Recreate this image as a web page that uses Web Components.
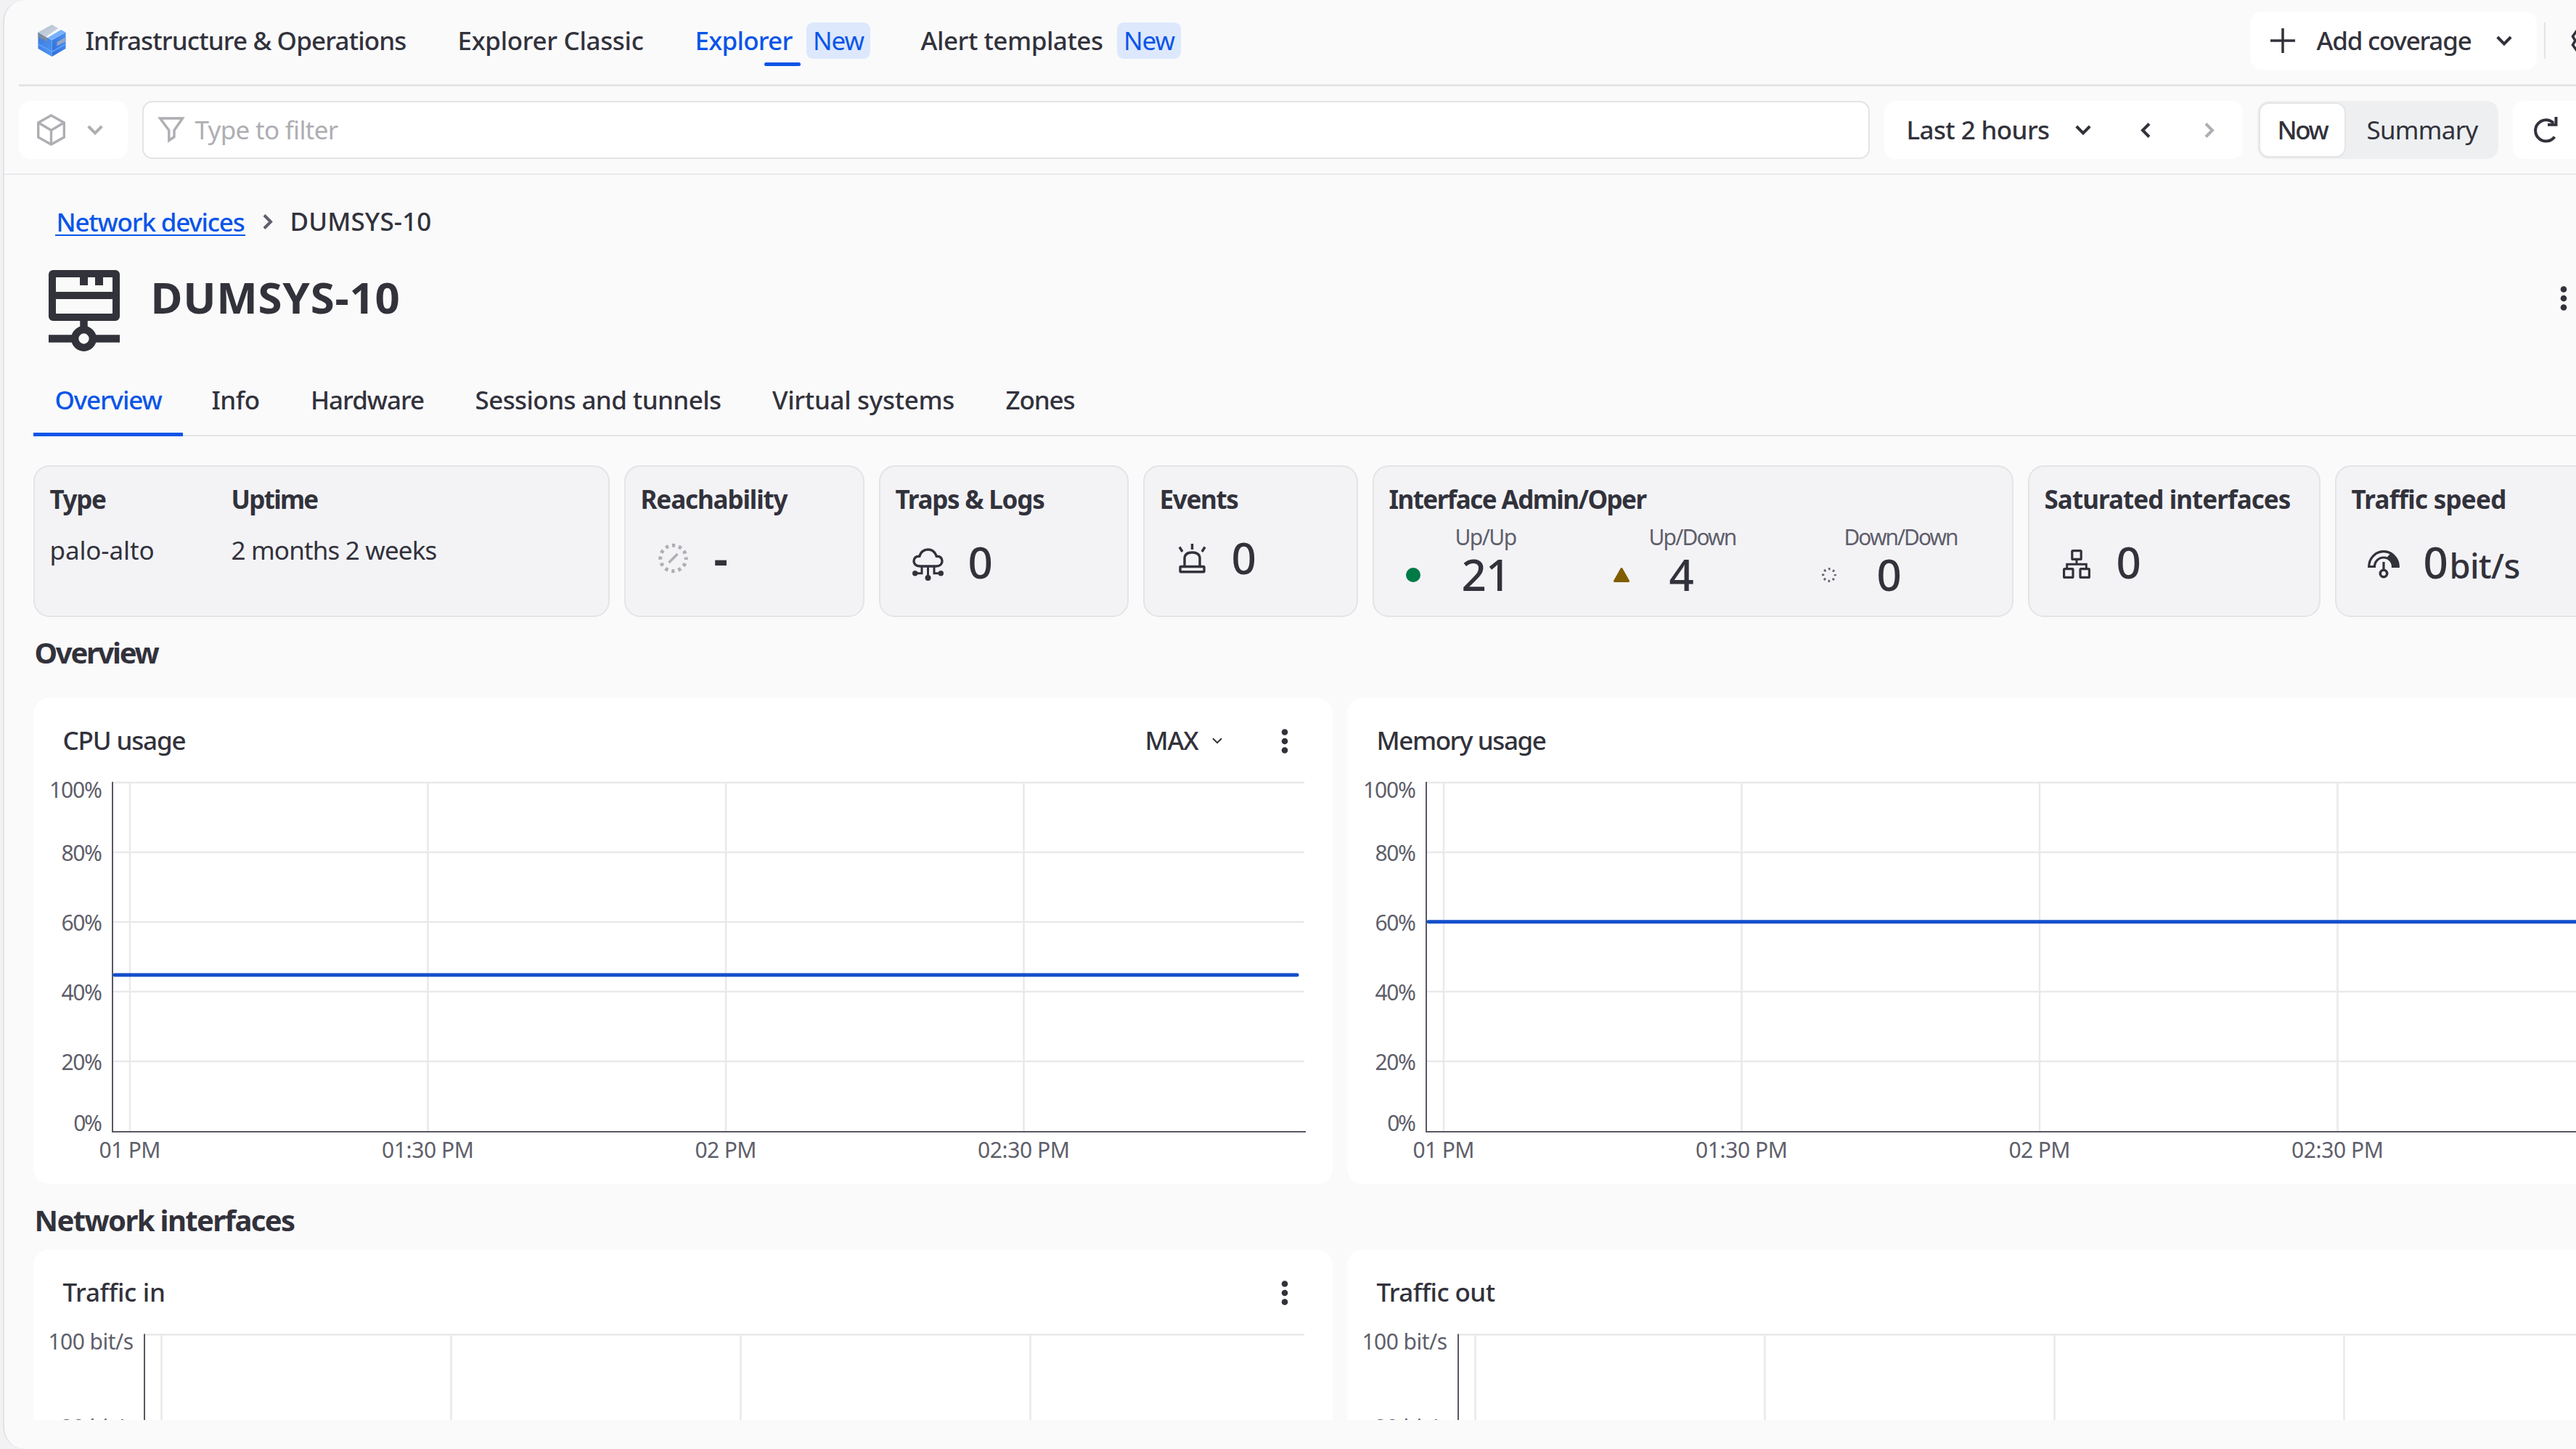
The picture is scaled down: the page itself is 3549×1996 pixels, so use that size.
<!DOCTYPE html>
<html lang="en">
<head>
<meta charset="utf-8">
<title>Infrastructure &amp; Operations</title>
<style>
  :root {
    --color-text: #32323b;
    --color-text-subdued: #5f5f6b;
    --color-text-disabled: #aeaeb3;
    --color-primary: #0a55e8;
    --color-line: #e4e4e6;
    --color-surface: #fff;
    --color-background: #fafafb;
  }

  body {
    margin: 0;
    width: 3549px;
    height: 1996px;
    overflow: hidden;
    background: #f2f2f5;
    color: var(--color-text);
    font: 500 35px/44px "Noto Sans", "Open Sans", sans-serif;
  }
</style>
</head>
<body>
<io-app></io-app>

<script>
(function () {
  const icons = {
    logo: [39, 44, `
      <defs>
        <linearGradient id="a" x1="0" y1="0" x2="1" y2="1"><stop offset="0" stop-color="#aebccd"/><stop offset="1" stop-color="#d5dce6"/></linearGradient>
        <linearGradient id="b" x1="0" y1="0" x2="1" y2="1"><stop offset="0" stop-color="#3a78d8"/><stop offset="1" stop-color="#4e97f7"/></linearGradient>
        <linearGradient id="c" x1="1" y1="0" x2="0" y2="1"><stop offset="0" stop-color="#4a8ff2"/><stop offset="1" stop-color="#2f6fd8"/></linearGradient>
      </defs>
      <path fill="url(#b)" d="M.5 10.5 19.5 21.5V44L.5 33z"/>
      <path fill="url(#c)" d="M19.5 21.5 38.5 10.5V33L19.5 44z"/>
      <path fill="url(#a)" d="M.5 10.5 19.5 0 28.5 5 13 15.5v3z"/>
      <path fill="#76b0fb" d="M13.5 18 32 7l6.5 3.5-19 11z"/>
      <path fill="#7c8a9f" d="M.5 11 13 18.5v5L9.5 21.5.5 17z"/>
      <path fill="#93a5c4" d="M26.5 24 38.5 17v6l-12 6.5z"/>
      <path fill="#5ea0f8" d="M.5 25.5 19.5 36.5 38.5 25.5V27.5L19.5 38.5.5 27.5z"/>`],
    cube: [39, 44, '<path d="M19.5 2 37.3 12v20L19.5 42 1.7 32V12zM2 12l17.5 10.5L37 12M19.5 22.5V42" stroke-width="3.4"/>'],
    funnel: [36, 36, '<path d="M2.5 2H33.5L22 18.5V27.5L14.8 32.5V18.5z" stroke-width="3.4"/>'],
    'chevron-down': [22, 14, '<path d="M1.8 2 11 11.5 20.2 2" stroke-width="4"/>'],
    'chevron-small': [14, 9, '<path d="M1 1.2 7 7.2 13 1.2" stroke-width="2"/>'],
    'chevron-left': [14, 21, '<path d="M12 1.5 3 10.5 12 19.5" stroke-width="4"/>'],
    'chevron-right': [14, 21, '<path d="M2 1.5 11 10.5 2 19.5" stroke-width="4"/>'],
    plus: [34, 34, '<path d="M17 0V34M0 17H34" stroke-width="3.5"/>'],
    refresh: [34, 36, '<path d="M28 8.5A14.6 14.6 0 1 0 29.5 27.5M31.5 0V10.7H20" stroke-width="4"/>'],
    settings: [38, 34, '<path d="M9 2 2.5 11 6 17 2.5 23 9 32M9 2 14 5 19 1 24 5 29 2 35 11 32 17 35 23 29 32 24 29 19 33 14 29 9 32" stroke-width="3.5"/>'],
    kebab: [10, 34, '<g class="f"><circle cx="5" cy="4.5" r="4.3"/><circle cx="5" cy="17" r="4.3"/><circle cx="5" cy="29.5" r="4.3"/></g>'],
    device: [98, 112, `
      <path class="f" fill-rule="evenodd" d="M6 0H92a6 6 0 0 1 6 6V64a6 6 0 0 1-6 6H6a6 6 0 0 1-6-6V6a6 6 0 0 1 6-6zM10 10V30H88V10H75V21H64V10H54V21H43V10zM10 40V60H88V40z"/>
      <path d="M48.5 70V80M0 94.5H36M61 94.5H98" stroke-width="10.5"/>
      <circle cx="48.5" cy="94.5" r="12.3" stroke-width="10.3"/>`],
    unknown: [41, 40, `
      <circle cx="20.5" cy="20" r="17.7" stroke-width="5" stroke-dasharray="4.3 4.967" stroke-dashoffset="2.15"/>
      <path d="M14.5 26 26.5 14" stroke-width="3.4"/>`],
    cloud: [43, 45, `
      <path d="M10.5 25C4.5 25 2 21.5 2 18 2 13.5 5 11 9.8 11.3 12 4.5 16.5 2 21.5 2S31 4.5 33.2 11.3C38 11 41 13.5 41 18 41 21.5 38.5 25 32.5 25z" stroke-width="3.4"/>
      <path d="M21.5 26V40M13 26V34.8H5M30 26V34.8H38" stroke-width="3"/>
      <g class="f"><circle cx="3.7" cy="34.8" r="3.7"/><circle cx="39.3" cy="34.8" r="3.7"/><circle cx="21.5" cy="41" r="4"/></g>`],
    siren: [39, 41, `
      <path d="M19.5 0V8M2 4.5 6 11M37 4.5 33 11" stroke-width="3.4"/>
      <path d="M9 31V20.5C9 14.5 12.5 12 19.5 12S30 14.5 30 20.5V31" stroke-width="3.4"/>
      <rect x="3" y="31.5" width="33" height="7.2" rx="1" stroke-width="3.4"/>`],
    network: [38, 40, `
      <path d="M19 14V20.3M5.7 26V20.3H32.3V26" stroke-width="3"/>
      <rect x="12.8" y="1.6" width="12.4" height="11.8" rx="1" stroke-width="3.2"/>
      <rect x="1.6" y="26.6" width="12.4" height="11.8" rx="1" stroke-width="3.2"/>
      <rect x="24" y="26.6" width="12.4" height="11.8" rx="1" stroke-width="3.2"/>`],
    gauge: [44, 39, `
      <path d="M1.7 22.5A20.3 20.8 0 0 1 42.3 22.5H34.5A12.5 12.5 0 0 0 9.5 22.5z" stroke-width="3.2"/>
      <path class="f" d="M31 4.5Q42 10 43 23H34.5Q34 14 26.5 10z"/>
      <path d="M22 16V27" stroke-width="3.2"/><circle cx="22" cy="32" r="4.7" stroke-width="3.6"/>`],
    up: [20, 20, '<circle class="f" cx="10" cy="10" r="10"/>'],
    warning: [22, 20, '<path class="f" d="M9.7.8a1.6 1.6 0 0 1 2.6 0L21.7 17.5Q22.5 20 20.5 20H1.5Q-.5 20 .3 17.5z"/>'],
    down: [20, 20, '<circle cx="10" cy="10" r="8.3" stroke-width="3.2" stroke-dasharray="2.6 3.919" stroke-dashoffset="1.3"/>'],
  };

  class IoIcon extends HTMLElement {
    connectedCallback() {
      const [width, height, body] = icons[this.getAttribute('name')];

      this.attachShadow({ mode: 'open' }).innerHTML = `
        <style>
          :host { display: block; flex: none; width: ${width}px; height: ${height}px; }
          svg { display: block; fill: none; stroke: currentColor; overflow: visible; }
          .f { fill: currentColor; stroke: none; }
          [fill^="#"], [fill^="url"] { stroke: none; }
        </style>
        <svg width="${width}" height="${height}" viewBox="0 0 ${width} ${height}">${body}</svg>
      `;
    }
  }

  // One line of text, tracked so that it fills a box `w` pixels wide.
  class IoText extends HTMLElement {
    connectedCallback() {
      const width = Number(this.getAttribute('w'));

      this.attachShadow({ mode: 'open' }).innerHTML = `
        <style>
          :host { display: block; flex: none; width: ${width}px; white-space: nowrap; }
          span { display: inline-block; margin-left: 1.5px; vertical-align: top; }
        </style>
        <span><slot></slot></span>
      `;

      const span = this.shadowRoot.querySelector('span');
      const natural = span.getBoundingClientRect().width;
      const length = this.textContent.length || this.getAttribute('length');
      span.style.letterSpacing = `${(width - 3 - natural) / length}px`;
    }
  }

  class IoBadge extends HTMLElement {
    connectedCallback() {
      this.attachShadow({ mode: 'open' }).innerHTML = `
        <style>
          :host {
            display: flex;
            align-items: center;
            justify-content: center;
            box-sizing: border-box;
            width: 88px;
            height: 50px;
            padding-bottom: 1px;
            border-radius: 9px;
            background: #dde8fc;
            color: var(--color-primary);
            font-weight: 400;
          }
        </style>
        <io-text w="73" length="3"><slot></slot></io-text>
      `;
    }
  }

  class IoHeader extends HTMLElement {
    connectedCallback() {
      this.attachShadow({ mode: 'open' }).innerHTML = `
        <style>
          :host {
            display: flex;
            align-items: center;
            box-sizing: border-box;
            height: 119px;
            margin-left: 20px;
            padding: 0 0 4px 26px;
            border-bottom: 3px solid var(--color-line);
          }
          nav { display: flex; align-items: center; gap: 68px; margin-left: 25px; }
          .item { display: flex; align-items: center; gap: 18px; position: relative; }
          .active { color: var(--color-primary); }
          .active::after {
            content: "";
            position: absolute;
            left: 97px;
            bottom: -10px;
            width: 50px;
            height: 5px;
            border-radius: 2.5px;
            background: var(--color-primary);
          }
          .add {
            display: flex;
            align-items: center;
            box-sizing: border-box;
            width: 395px;
            height: 80px;
            margin-left: 1473px;
            padding: 0 34px 0 28px;
            border-radius: 16px;
            background: var(--color-surface);
          }
          .add io-text { margin: 0 33px 0 28px; }
          .divider { width: 2px; height: 50px; margin: 0 35px 0 10px; background: var(--color-line); }
        </style>
        <io-icon name="logo"></io-icon>
        <nav>
          <io-text w="445">Infrastructure &amp; Operations</io-text>
          <io-text w="259">Explorer Classic</io-text>
          <div class="item active"><io-text w="137">Explorer</io-text><io-badge>New</io-badge></div>
          <div class="item"><io-text w="254">Alert templates</io-text><io-badge>New</io-badge></div>
        </nav>
        <div class="add">
          <io-icon name="plus"></io-icon>
          <io-text w="216">Add coverage</io-text>
          <io-icon name="chevron-down"></io-icon>
        </div>
        <div class="divider"></div>
        <io-icon name="settings"></io-icon>
      `;
    }
  }

  class IoFilterBar extends HTMLElement {
    connectedCallback() {
      this.attachShadow({ mode: 'open' }).innerHTML = `
        <style>
          :host {
            display: flex;
            align-items: center;
            gap: 20px;
            box-sizing: border-box;
            height: 122px;
            padding: 0 0 0 20px;
            border-bottom: 2px solid #e9e9eb;
          }
          .box {
            display: flex;
            align-items: center;
            flex: none;
            box-sizing: border-box;
            height: 80px;
            border-radius: 16px;
            background: var(--color-surface);
          }
          .type { width: 150px; padding-left: 25px; gap: 30px; color: var(--color-text-disabled); }
          .filter {
            width: 2380px;
            padding-left: 20px;
            gap: 13px;
            border: 2px solid var(--color-line);
            border-radius: 14px;
            color: var(--color-text-disabled);
            font-weight: 400;
          }
          .time { width: 494px; padding-left: 29px; }
          .time .open { margin: 0 68px 0 34px; }
          .time .next { margin-left: 74px; color: var(--color-text-disabled); }
          .mode { width: 332px; padding-left: 4px; gap: 29px; background: #eeeff1; font-weight: 400; }
          .mode .on {
            display: flex;
            align-items: center;
            justify-content: center;
            width: 116px;
            height: 72px;
            border-radius: 12px;
            background: var(--color-surface);
            box-shadow: 0 0 0 2px #e5e5e8, 0 2px 1px #cfcfd4;
            font-weight: 500;
          }
          .refresh { width: 100px; padding-left: 28px; }
        </style>
        <div class="box type"><io-icon name="cube"></io-icon><io-icon name="chevron-down"></io-icon></div>
        <div class="box filter"><io-icon name="funnel"></io-icon><io-text w="200">Type to filter</io-text></div>
        <div class="box time">
          <io-text w="200">Last 2 hours</io-text>
          <io-icon class="open" name="chevron-down"></io-icon>
          <io-icon name="chevron-left"></io-icon>
          <io-icon class="next" name="chevron-right"></io-icon>
        </div>
        <div class="box mode"><div class="on"><io-text w="72">Now</io-text></div><io-text w="156">Summary</io-text></div>
        <div class="box refresh"><io-icon name="refresh"></io-icon></div>
      `;
    }
  }

  class IoTitle extends HTMLElement {
    connectedCallback() {
      this.attachShadow({ mode: 'open' }).innerHTML = `
        <style>
          :host { display: block; box-sizing: border-box; height: 276px; padding-top: 42px; }
          .crumbs { display: flex; align-items: center; height: 44px; margin-left: 70px; }
          .crumbs io-icon { margin: 0 22px 0 24px; color: var(--color-text-subdued); }
          .link { color: var(--color-primary); box-shadow: inset 0 -2px var(--color-primary); height: 39px; line-height: 39px; }
          .title { display: flex; align-items: flex-start; margin: 45px 0 0 61px; }
          .title io-text { margin: -3px 0 0 41px; font-weight: 700; font-size: 60px; line-height: 80px; }
          .title .more { margin: 22px 0 0 2974px; }
        </style>
        <div class="crumbs">
          <io-text class="link" w="262">Network devices</io-text>
          <io-icon name="chevron-right"></io-icon>
          <io-text w="198">DUMSYS-10</io-text>
        </div>
        <div class="title">
          <io-icon name="device"></io-icon>
          <io-text w="347">DUMSYS-10</io-text>
          <io-icon class="more" name="kebab"></io-icon>
        </div>
      `;
    }
  }

  class IoTabs extends HTMLElement {
    connectedCallback() {
      this.attachShadow({ mode: 'open' }).innerHTML = `
        <style>
          :host {
            display: flex;
            box-sizing: border-box;
            height: 84px;
            margin-left: 40px;
            border-bottom: 2px solid var(--color-line);
          }
          io-text { margin-right: 67.5px; line-height: 67px; }
          .active {
            box-sizing: border-box;
            width: 206px;
            height: 84px;
            margin-right: 38px;
            padding-left: 28px;
            border-bottom: 5px solid var(--color-primary);
            color: var(--color-primary);
          }
          .active io-text { margin: 0; }
        </style>
        <div class="active"><io-text w="150">Overview</io-text></div>
        <io-text w="69">Info</io-text>
        <io-text w="159">Hardware</io-text>
        <io-text w="342">Sessions and tunnels</io-text>
        <io-text w="254">Virtual systems</io-text>
        <io-text w="98">Zones</io-text>
      `;
    }
  }

  class IoStatCard extends HTMLElement {
    connectedCallback() {
      this.attachShadow({ mode: 'open' }).innerHTML = `
        <style>
          :host {
            display: block;
            flex: none;
            box-sizing: border-box;
            height: 209px;
            padding: 23px 0 0 19px;
            border: 2px solid #e4e4e7;
            border-radius: 22px;
            background: #f3f3f6;
          }
        </style>
        <slot name="title"></slot>
        <slot></slot>
      `;
    }
  }

  class IoStats extends HTMLElement {
    connectedCallback() {
      this.attachShadow({ mode: 'open' }).innerHTML = `
        <style>
          :host { display: flex; gap: 20px; margin: 40px 0 0 40px; }
          [slot=title], .facts .head { font-weight: 700; }
          .facts { display: grid; grid-template-columns: 250px auto; row-gap: 26px; font-weight: 400; }
          .kpi { display: flex; align-items: center; height: 60px; margin-top: 28px; }
          .kpi.low { margin-top: 34px; }
          .value { font-size: 60px; line-height: 60px; }
          .muted { color: var(--color-text-disabled); }
          .dash { font-weight: 700; }
          .unit { font-size: 47px; line-height: 60px; margin-top: 10px; }
          .states { display: flex; }
          .state { width: 286px; display: grid; grid-template-columns: auto 1fr; }
          .state .label {
            grid-column: 2;
            margin-top: 12px;
            font-size: 30px;
            line-height: 36px;
            font-weight: 400;
            color: var(--color-text-subdued);
          }
          .state io-icon { align-self: center; margin-top: 5px; }
          .state .value { margin-top: 3px; }
        </style>
        <io-stat-card style="width: 794px">
          <div class="facts">
            <io-text class="head" w="80">Type</io-text>
            <io-text class="head" w="122">Uptime</io-text>
            <io-text w="147">palo-alto</io-text>
            <io-text w="286">2 months 2 weeks</io-text>
          </div>
        </io-stat-card>
        <io-stat-card style="width: 331px">
          <io-text slot="title" w="205">Reachability</io-text>
          <div class="kpi">
            <io-icon class="muted" name="unknown" style="margin: 2px 34px 0 26px"></io-icon>
            <io-text class="value dash" w="28">-</io-text>
          </div>
        </io-stat-card>
        <io-stat-card style="width: 344px">
          <io-text slot="title" w="208">Traps &amp; Logs</io-text>
          <div class="kpi low">
            <io-icon name="cloud" style="margin: 6px 32px 0 25px"></io-icon>
            <io-text class="value" w="37">0</io-text>
          </div>
        </io-stat-card>
        <io-stat-card style="width: 296px">
          <io-text slot="title" w="111">Events</io-text>
          <div class="kpi">
            <io-icon name="siren" style="margin: 2px 33px 0 27px"></io-icon>
            <io-text class="value" w="37">0</io-text>
          </div>
        </io-stat-card>
        <io-stat-card style="width: 883px">
          <io-text slot="title" w="357">Interface Admin/Oper</io-text>
          <div class="states">
            <div class="state">
              <io-text class="label" w="87" style="margin-left: 46px">Up/Up</io-text>
              <io-icon name="up" style="margin-left: 25px; color: #007a47"></io-icon>
              <io-text class="value" w="70" style="margin-left: 55px">21</io-text>
            </div>
            <div class="state">
              <io-text class="label" w="123" style="margin-left: 25px">Up/Down</io-text>
              <io-icon name="warning" style="margin-left: 25px; color: #805d00"></io-icon>
              <io-text class="value" w="37" style="margin-left: 53px">4</io-text>
            </div>
            <div class="state">
              <io-text class="label" w="159" style="margin-left: 9px">Down/Down</io-text>
              <io-icon name="down" style="margin-left: 26px; color: #5f5f6b"></io-icon>
              <io-text class="value" w="37" style="margin-left: 54px">0</io-text>
            </div>
          </div>
        </io-stat-card>
        <io-stat-card style="width: 403px">
          <io-text slot="title" w="342">Saturated interfaces</io-text>
          <div class="kpi low">
            <io-icon name="network" style="margin: 5px 34px 0 27px"></io-icon>
            <io-text class="value" w="37">0</io-text>
          </div>
        </io-stat-card>
        <io-stat-card style="width: 420px">
          <io-text slot="title" w="216">Traffic speed</io-text>
          <div class="kpi low">
            <io-icon name="gauge" style="margin: 6px 31px 0 24px"></io-icon>
            <io-text class="value" w="36">0</io-text><io-text class="unit" w="100">bit/s</io-text>
          </div>
        </io-stat-card>
      `;
    }
  }

  class IoChart extends HTMLElement {
    connectedCallback() {
      const unit = this.getAttribute('unit');
      const value = this.getAttribute('value');
      const percent = unit === '%';
      const axis = percent ? 109 : 153;
      const first = percent ? 133 : 176.5;
      const step = percent ? 410.5 : 399;
      const rowStep = percent ? 96 : 127;
      const top = percent ? 12 : 12.5;
      const bottom = percent ? 493 : 648;
      const end = 1752;
      // rows past the visible part of a clipped card are left out
      const ticks = percent ? [100, 80, 60, 40, 20, 0] : [100, 80];

      const rows = ticks.map((n, i) => {
        const y = top + i * rowStep;
        const baseline = n === 100 ? 33 : n === 0 ? bottom - 1 : y + 11.5;
        const width = (percent ? 23 : 67.5) + 16.7 * String(n).length;
        const line = n === 0 ? '' : `<line x1="${axis}" x2="${end - 1}" y1="${y}" y2="${y}"/>`;
        return `${line}<text x="${percent ? 95 : 138}" y="${baseline}" text-anchor="end" textLength="${width}">${n}${unit}</text>`;
      }).join('');

      const columns = ['01 PM', '01:30 PM', '02 PM', '02:30 PM'].map((label, i) => {
        const x = first + i * step;
        const text = `<text x="${x}" y="${bottom + 36}" text-anchor="middle" textLength="${i % 2 ? 127 : 85}">${label}</text>`;
        return `<line x1="${x}" x2="${x}" y1="${top}" y2="${bottom}"/>${percent ? text : ''}`;
      }).join('');

      const y = bottom - (value / 100) * 482;
      const series = value ? `<line class="series" x1="${axis + 3}" x2="1741" y1="${y}" y2="${y}"/>` : '';

      this.attachShadow({ mode: 'open' }).innerHTML = `
        <style>
          :host {
            display: block;
            flex: none;
            width: 1790px;
            height: 670px;
            border-radius: 22px;
            background: var(--color-surface);
            overflow: hidden;
          }
          header { display: flex; align-items: center; box-sizing: border-box; height: 105px; padding: 13px 0 0 39px; }
          .tools { display: flex; align-items: center; margin-left: auto; padding-right: 61px; }
          .tools .kebab { margin: 2px 0 0 81px; }
          .agg { display: flex; align-items: center; gap: 18px; }
          svg { display: block; width: 100%; height: 565px; }
          text { font-size: 30px; font-weight: 400; fill: var(--color-text-subdued); }
          line { stroke: #e9e9eb; stroke-width: 2.5; }
          .axis { fill: none; stroke: #585864; stroke-width: 2; }
          .series { stroke: #134fcb; stroke-width: 5; stroke-linecap: round; }
        </style>
        <header>
          <slot name="title"></slot>
          <div class="tools">
            <div class="agg"><slot name="agg"></slot></div>
            <io-icon class="kebab" name="kebab"></io-icon>
          </div>
        </header>
        <svg>
          ${rows}${columns}
          <path class="axis" d="M${axis} ${top - 1}V${bottom}H${end + 1}"/>
          ${series}
        </svg>
      `;
    }
  }

  class IoSection extends HTMLElement {
    connectedCallback() {
      this.attachShadow({ mode: 'open' }).innerHTML = `
        <style>
          :host { display: block; margin-left: 40px; }
          .charts { display: flex; gap: 20px; }
        </style>
        <slot name="heading"></slot>
        <div class="charts"><slot></slot></div>
      `;
    }
  }

  class IoApp extends HTMLElement {
    connectedCallback() {
      this.attachShadow({ mode: 'open' }).innerHTML = `
        <style>
          :host {
            display: block;
            box-sizing: border-box;
            width: 3600px;
            height: 1996px;
            margin-left: 4px;
            border-left: 2px solid #e2e2e5;
            border-radius: 30px 0 0 30px;
            background: var(--color-background);
            overflow: hidden;
          }
          main { height: 1715px; overflow: hidden; }
          .overview { margin-top: 24px; }
          .interfaces { margin-top: 25px; }
          [slot=heading] { font-size: 40px; font-weight: 700; line-height: 50px; }
          .overview [slot=heading] { margin-bottom: 37px; }
          .interfaces [slot=heading] { margin-bottom: 15px; }
        </style>
        <io-header></io-header>
        <io-filter-bar></io-filter-bar>
        <main>
          <io-title></io-title>
          <io-tabs></io-tabs>
          <io-stats></io-stats>
          <io-section class="overview">
            <io-text slot="heading" w="173">Overview</io-text>
            <io-chart unit="%" value="44.8">
              <io-text slot="title" w="172">CPU usage</io-text>
              <io-text slot="agg" w="76">MAX</io-text>
              <io-icon slot="agg" name="chevron-small"></io-icon>
            </io-chart>
            <io-chart unit="%" value="60">
              <io-text slot="title" w="236">Memory usage</io-text>
            </io-chart>
          </io-section>
          <io-section class="interfaces">
            <io-text slot="heading" w="361">Network interfaces</io-text>
            <io-chart unit=" bit/s">
              <io-text slot="title" w="144">Traffic in</io-text>
            </io-chart>
            <io-chart unit=" bit/s">
              <io-text slot="title" w="166">Traffic out</io-text>
            </io-chart>
          </io-section>
        </main>
      `;
    }
  }

  customElements.define('io-app', IoApp);
  customElements.define('io-header', IoHeader);
  customElements.define('io-filter-bar', IoFilterBar);
  customElements.define('io-title', IoTitle);
  customElements.define('io-tabs', IoTabs);
  customElements.define('io-stats', IoStats);
  customElements.define('io-stat-card', IoStatCard);
  customElements.define('io-section', IoSection);
  customElements.define('io-chart', IoChart);
  customElements.define('io-badge', IoBadge);
  customElements.define('io-icon', IoIcon);
  customElements.define('io-text', IoText);
})();
</script>
</body>
</html>
